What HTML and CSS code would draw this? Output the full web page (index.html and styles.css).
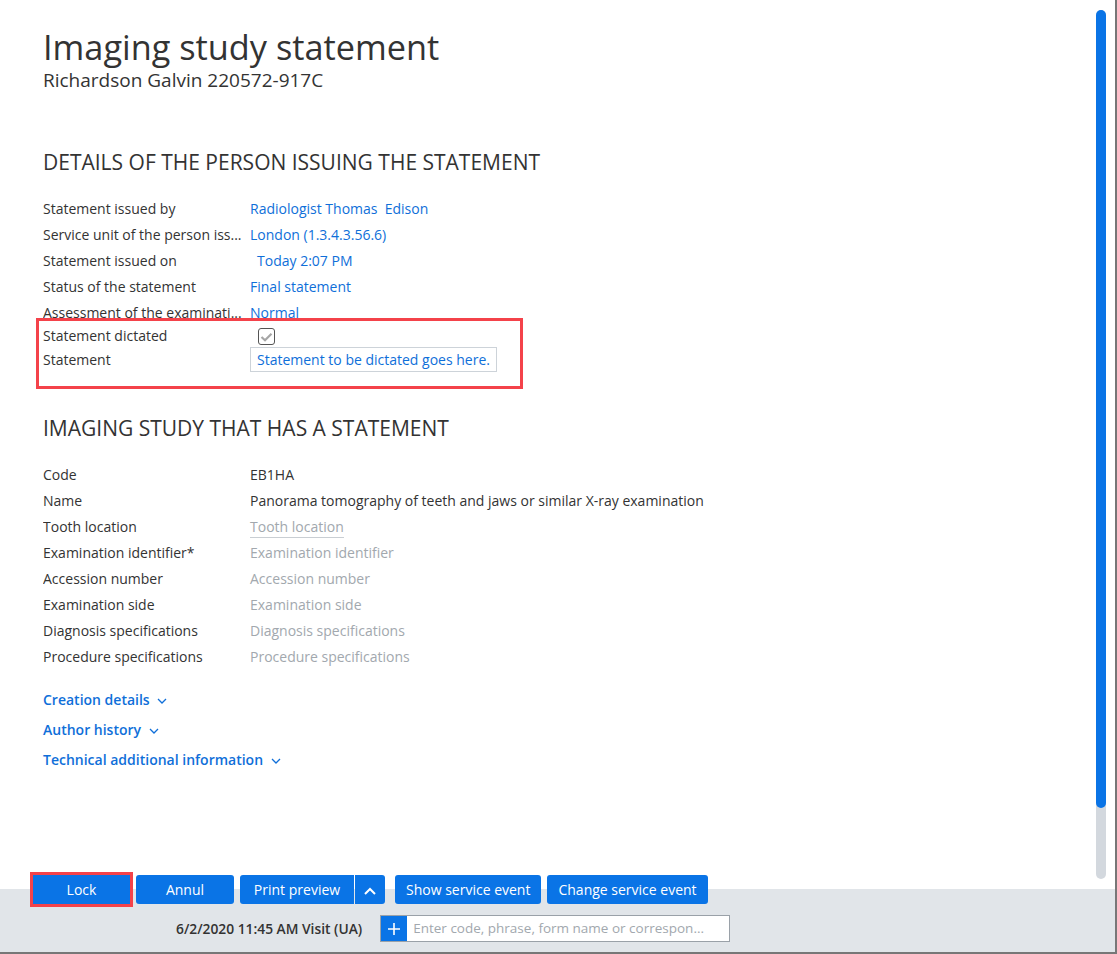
FILE: index.html
```html
<!DOCTYPE html>
<html lang="en">
<head>
  <meta charset="UTF-8">
  <title>Imaging study statement</title>
  <link rel="stylesheet" href="styles.css">
</head>
<body>
<div class="app">
  <div class="content">
    <h1 class="title">Imaging study statement</h1>
    <div class="patient">Richardson Galvin 220572-917C</div>

    <h2 class="section-title first">DETAILS OF THE PERSON ISSUING THE STATEMENT</h2>
    <div class="rows">
      <div class="row"><span class="label">Statement issued by</span><span class="value link">Radiologist Thomas&nbsp; Edison</span></div>
      <div class="row"><span class="label" title="Service unit of the person issuing the statement">Service unit of the person iss...</span><span class="value link">London (1.3.4.3.56.6)</span></div>
      <div class="row"><span class="label">Statement issued on</span><span class="value link indent">Today 2:07 PM</span></div>
      <div class="row"><span class="label">Status of the statement</span><span class="value link">Final statement</span></div>
      <div class="row"><span class="label" title="Assessment of the examination">Assessment of the examinati...</span><span class="value link">Normal</span></div>
      <div class="highlight">
        <div class="row short"><span class="label">Statement dictated</span><span class="value"><span class="checkbox">
          <svg width="13" height="10" viewBox="0 0 13 10"><path d="M1.5 5 L5 8.2 L11.5 1.8" fill="none" stroke="#a6a6a6" stroke-width="2.2"/></svg>
        </span></span></div>
        <div class="row"><span class="label">Statement</span><span class="value"><span class="text-box">Statement to be dictated goes here.</span></span></div>
      </div>
    </div>

    <h2 class="section-title second">IMAGING STUDY THAT HAS A STATEMENT</h2>
    <div class="rows">
      <div class="row"><span class="label">Code</span><span class="value">EB1HA</span></div>
      <div class="row"><span class="label">Name</span><span class="value">Panorama tomography of teeth and jaws or similar X-ray examination</span></div>
      <div class="row"><span class="label">Tooth location</span><span class="value muted"><span class="underlined">Tooth location</span></span></div>
      <div class="row"><span class="label">Examination identifier*</span><span class="value muted">Examination identifier</span></div>
      <div class="row"><span class="label">Accession number</span><span class="value muted">Accession number</span></div>
      <div class="row"><span class="label">Examination side</span><span class="value muted">Examination side</span></div>
      <div class="row"><span class="label">Diagnosis specifications</span><span class="value muted">Diagnosis specifications</span></div>
      <div class="row"><span class="label">Procedure specifications</span><span class="value muted">Procedure specifications</span></div>
    </div>

    <div class="toggles">
      <div class="toggle">Creation details <svg width="10" height="6" viewBox="0 0 10 6"><path d="M1 1 L5 5 L9 1" fill="none" stroke="#0f6fd9" stroke-width="1.3"/></svg></div>
      <div class="toggle">Author history <svg width="10" height="6" viewBox="0 0 10 6"><path d="M1 1 L5 5 L9 1" fill="none" stroke="#0f6fd9" stroke-width="1.3"/></svg></div>
      <div class="toggle">Technical additional information <svg width="10" height="6" viewBox="0 0 10 6"><path d="M1 1 L5 5 L9 1" fill="none" stroke="#0f6fd9" stroke-width="1.3"/></svg></div>
    </div>

    <div class="scrollbar"><div class="thumb"></div></div>
  </div>

  <div class="footer">
    <div class="actions">
      <button class="btn marked">Lock</button>
      <button class="btn">Annul</button>
      <div class="split">
        <button class="btn split-main">Print preview</button>
        <button class="btn split-arrow"><svg width="12" height="8" viewBox="0 0 12 8"><path d="M1 7 L6 2 L11 7" fill="none" stroke="#fff" stroke-width="2"/></svg></button>
      </div>
      <button class="btn">Show service event</button>
      <button class="btn">Change service event</button>
    </div>
    <div class="entry-row">
      <span class="visit">6/2/2020 11:45 AM Visit (UA)</span>
      <div class="entry">
        <span class="entry-plus"><svg width="12" height="12" viewBox="0 0 12 12"><path d="M6 0 V12 M0 6 H12" stroke="#fff" stroke-width="1.6"/></svg></span>
        <span class="entry-input">Enter code, phrase, form name or correspon...</span>
      </div>
    </div>
  </div>
</div>
</body>
</html>
```

FILE: styles.css
```css
:root {
  --text: #333;
  --blue: #0f6fd9;
  --btn: #0a74e6;
  --muted: #a2a8ae;
  --footer: #e1e5e9;
  --mark: #f4424a;
}
* {
  box-sizing: border-box;
}
body {
  margin: 0;
  font-family: 'Open Sans', 'Noto Sans', sans-serif;
  color: var(--text);
  background: #fff;
  overflow: hidden;
}
.app {
  width: 1117px;
  height: 954px;
  border-right: 2px solid #777;
  display: flex;
  flex-direction: column;
}
.content {
  position: relative;
  flex: 1;
  padding: 26px 43px 0;
}
.title {
  margin: 0;
  font-size: 34.3px;
  font-weight: 400;
  line-height: 42px;
}
.patient {
  margin-top: 2px;
  font-size: 19px;
  line-height: 20px;
}
.section-title {
  margin: 41px 0 19px;
  font-size: 21px;
  font-weight: 400;
  line-height: 28px;
}
.section-title.first {
  margin-top: 58px;
}
.section-title.second {
  margin-top: 42px;
}
.row {
  display: flex;
  height: 26px;
  align-items: center;
  font-size: 14px;
}
.row.short {
  height: 21px;
}
.label {
  width: 207px;
  padding-right: 3px;
  white-space: nowrap;
  overflow: hidden;
  text-overflow: ellipsis;
}
.value {
  white-space: nowrap;
}
.link {
  color: var(--blue);
}
.indent {
  padding-left: 7px;
}
.muted {
  color: var(--muted);
}
.underlined {
  border-bottom: 1px solid #c9ced3;
  padding-bottom: 1px;
}
.highlight {
  position: relative;
}
.highlight::after {
  content: '';
  position: absolute;
  left: -7px;
  top: -7px;
  bottom: -17px;
  width: 481px;
  border: 3px solid var(--mark);
}
.checkbox {
  display: inline-flex;
  align-items: center;
  justify-content: center;
  width: 17px;
  height: 17px;
  margin-left: 8px;
  border: 1.5px solid #555;
  border-radius: 3px;
  vertical-align: middle;
}
.text-box {
  display: inline-block;
  height: 25px;
  line-height: 23px;
  padding: 0 6px;
  border: 1px solid #cdd3d9;
  color: var(--blue);
}
.toggles {
  margin-top: 16px;
}
.toggle {
  height: 30px;
  line-height: 30px;
  font-size: 14px;
  font-weight: 600;
  color: var(--blue);
}
.toggle svg {
  margin-left: 4px;
  vertical-align: middle;
}
.scrollbar {
  position: absolute;
  top: 10px;
  right: 9px;
  width: 10px;
  height: 869px;
  border-radius: 5px;
  background: #d3d8de;
}
.thumb {
  height: 798px;
  border-radius: 5px;
  background: var(--btn);
}
.footer {
  background: var(--footer);
  height: 65px;
  border-bottom: 2px solid #777;
  padding-left: 33px;
}
.actions {
  display: flex;
  margin-top: -14px;
  height: 29px;
  gap: 6px;
}
.btn {
  height: 29px;
  min-width: 98px;
  padding: 0 11px;
  border: none;
  border-radius: 3px;
  background: var(--btn);
  color: #fff;
  font-family: inherit;
  font-size: 14px;
  cursor: pointer;
}
.btn.marked {
  outline: 3px solid var(--mark);
  border-radius: 0;
  min-width: 97px;
}
.split {
  display: flex;
  gap: 1px;
  margin-right: 4px;
}
.split-main {
  min-width: 114px;
  border-radius: 3px 0 0 3px;
}
.split-arrow {
  min-width: 30px;
  padding: 0;
  border-radius: 0 3px 3px 0;
}
.entry-row {
  display: flex;
  align-items: center;
  margin-top: 11px;
  padding-left: 143px;
}
.visit {
  font-size: 13.8px;
  font-weight: 600;
  margin-right: 18px;
}
.entry {
  display: flex;
  width: 350px;
  height: 27px;
  border: 1px solid #9aa1a8;
  background: #fff;
}
.entry-plus {
  display: flex;
  align-items: center;
  justify-content: center;
  width: 26px;
  background: var(--btn);
}
.entry-input {
  padding-left: 6px;
  line-height: 25px;
  font-size: 13.5px;
  color: var(--muted);
  white-space: nowrap;
}
```
